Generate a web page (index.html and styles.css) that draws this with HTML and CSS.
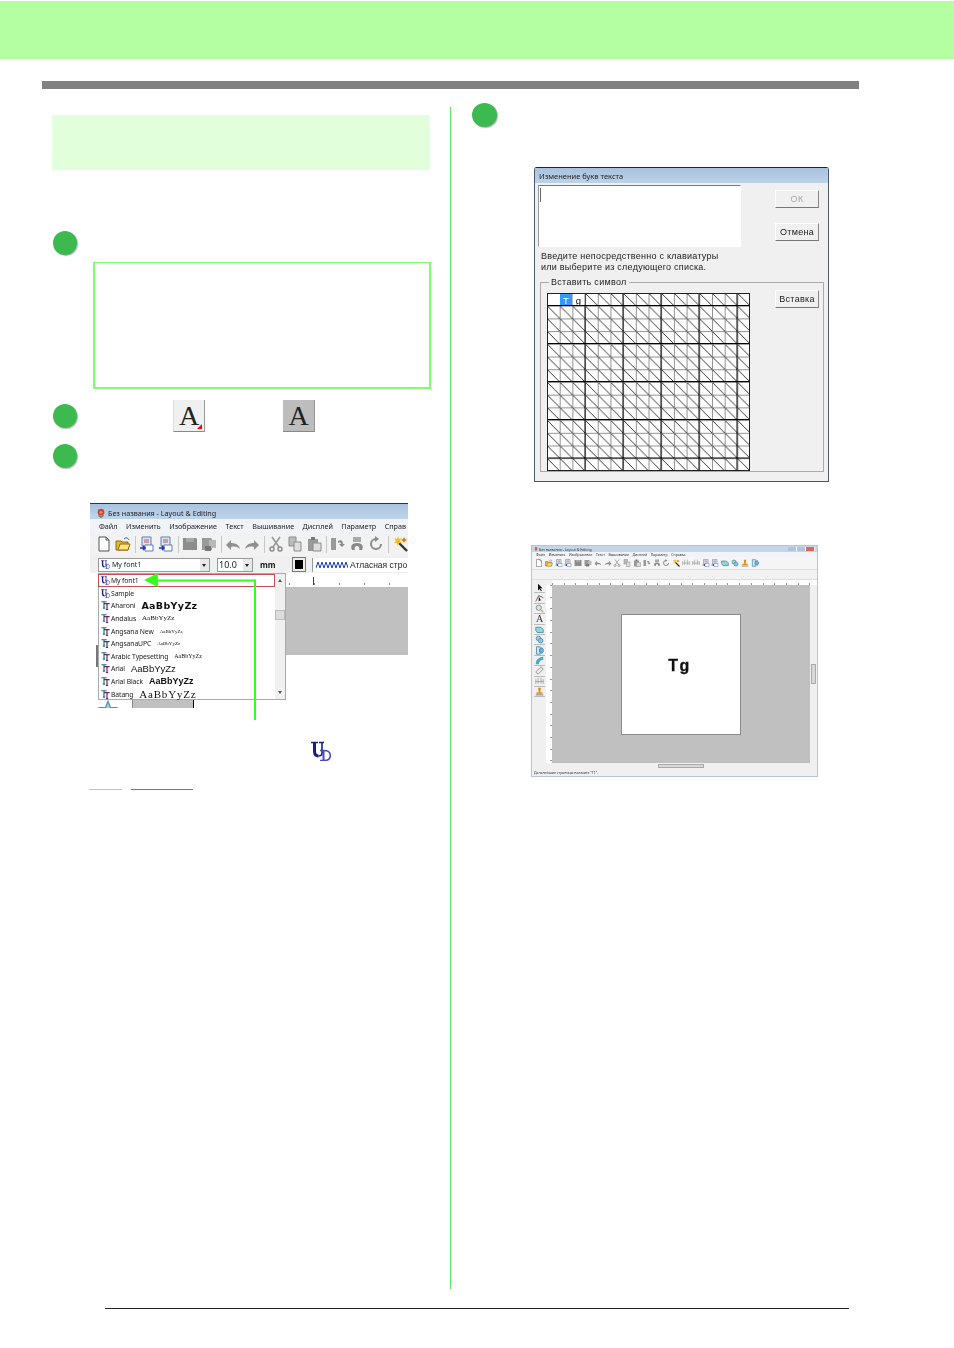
FILE: index.html
```html
<!DOCTYPE html>
<html lang="ru">
<head>
    <meta charset="UTF-8">
    <meta name="viewport" content="width=device-width, initial-scale=1.0">
    <title>Layout &amp; Editing</title>
    <link rel="stylesheet" href="styles.css">
</head>
<body>
    <svg class="icon-defs" width="0" height="0">
        <symbol id="ic-new" viewBox="0 0 16 16"><path d="M3 1h7l3 3v11H3z" fill="#fff" stroke="#555"/><path d="M10 1v3h3" fill="none" stroke="#555"/></symbol>
        <symbol id="ic-open" viewBox="0 0 16 16"><path d="M1 5h5l1 1h6v8H1z" fill="#e8b92e" stroke="#8a6a10"/><path d="M3 14l2-6h10l-2 6z" fill="#ffe27a" stroke="#8a6a10"/><path d="M9 3c2-2 4-1 5 1" fill="none" stroke="#2a4fb5"/></symbol>
        <symbol id="ic-import" viewBox="0 0 16 16"><path d="M3 1h9v9H3z" fill="#d9e6f5" stroke="#5f7fa8"/><path d="M5 4h5M5 6h5" stroke="#c0506a"/><path d="M6 9h8v6H6z" fill="#fff" stroke="#5f7fa8"/><path d="M1 12h5M4 10l2 2-2 2" fill="none" stroke="#2233bb" stroke-width="1.5"/></symbol>
        <symbol id="ic-save" viewBox="0 0 16 16"><path d="M1 2h13l1 1v11H1z" fill="#8c8c8c"/><path d="M4 2h8v4H4z" fill="#a8a8a8"/></symbol>
        <symbol id="ic-saveas" viewBox="0 0 16 16"><path d="M1 2h9l1 1v11H1z" fill="#9a9a9a"/><path d="M8 4h7v8H8z" fill="#b8b8b8"/><path d="M4 10h6v5H4z" fill="#777"/></symbol>
        <symbol id="ic-undo" viewBox="0 0 16 16"><path d="M1 9l5-5v3c5 0 8 2 9 6-2-2-5-3-9-2v3z" fill="#8f8f8f"/></symbol>
        <symbol id="ic-redo" viewBox="0 0 16 16"><path d="M15 9l-5-5v3C5 7 2 9 1 13c2-2 5-3 9-2v3z" fill="#8f8f8f"/></symbol>
        <symbol id="ic-cut" viewBox="0 0 16 16"><path d="M4 1l7 10M12 1L5 11" stroke="#999" stroke-width="1.6" fill="none"/><circle cx="4" cy="13" r="2" fill="none" stroke="#888" stroke-width="1.4"/><circle cx="12" cy="13" r="2" fill="none" stroke="#888" stroke-width="1.4"/></symbol>
        <symbol id="ic-copy" viewBox="0 0 16 16"><path d="M2 1h7v9H2z" fill="#bbb" stroke="#8b8b8b"/><path d="M7 6h7v9H7z" fill="#ddd" stroke="#8b8b8b"/></symbol>
        <symbol id="ic-paste" viewBox="0 0 16 16"><path d="M2 3h10v12H2z" fill="#999"/><path d="M5 1h4v3H5z" fill="#777"/><path d="M7 7h8v8H7z" fill="#ddd" stroke="#8b8b8b"/></symbol>
        <symbol id="ic-flip" viewBox="0 0 16 16"><path d="M1 2h5v12H1z" fill="#999"/><path d="M8 5c3-2 5 0 5 3h2l-3 3-3-3h2c0-1-1-2-3-1z" fill="#8a8a8a"/></symbol>
        <symbol id="ic-rot" viewBox="0 0 16 16"><path d="M4 1h8v5H4z" fill="#aaa"/><path d="M3 14c-2-4 0-7 5-7s7 3 5 7h-3c1-2 0-4-2-4s-3 2-2 4z" fill="#888"/></symbol>
        <symbol id="ic-turn" viewBox="0 0 16 16"><path d="M13 8a5 5 0 1 1-5-5" fill="none" stroke="#8a8a8a" stroke-width="2"/><path d="M7 0l4 3-4 3z" fill="#8a8a8a"/></symbol>
        <symbol id="ic-wand" viewBox="0 0 16 16"><path d="M6 6l9 9" stroke="#333" stroke-width="2.4"/><path d="M6 0l1 3 3-1-2 3 2 2-3 0-1 3-1-3-3 0 2-2-2-3 3 1z" fill="#f0c020"/><path d="M12 1l1 2 2 1-2 1-1 2-1-2-2-1 2-1z" fill="#e07020"/></symbol>
        <symbol id="ic-ud" viewBox="0 0 20 20"><path d="M0 1.500h7M8 1.500h5" fill="none" stroke="#1c1c85" stroke-width="1.500"/><path d="M3.500 1.500V10c0 3 1.500 5 4 5" fill="none" stroke="#1c1c85" stroke-width="3"/><path d="M11 1.500V12c0 2-1.500 3-3.500 3" fill="none" stroke="#1c1c85" stroke-width="1.600"/><path d="M9 9.500h4c4 0 6.300 2.200 6.300 5s-2.300 5-6.300 5H9" fill="none" stroke="#4a4ab8" stroke-width="1.500"/><path d="M12.500 9.500v10" stroke="#4a4ab8" stroke-width="2"/></symbol>
        <symbol id="ic-tt" viewBox="0 0 12 12"><path d="M0.500 1h7M4 1v8M2.500 9.500h3" fill="none" stroke="#167a6c" stroke-width="1.600"/><path d="M4 3.500h7.500M8 3.500v8M6.500 11.500h3" fill="none" stroke="#7a1a6a" stroke-width="1.600"/></symbol>
        <symbol id="ic-star" viewBox="0 0 16 16"><path d="M8 1l2 5 5 0-4 3 2 6-5-4-5 4 2-6-4-3 5 0z" fill="#9fd0e8" stroke="#5b8fb0"/></symbol>
        <symbol id="ic-rose" viewBox="0 0 12 12"><circle cx="6" cy="5" r="4" fill="#d8402c"/><circle cx="6" cy="5" r="1.800" fill="#f08a70"/><path d="M3 9l3 2 3-2" fill="none" stroke="#4a8a3a" stroke-width="1.500"/></symbol>
        <symbol id="ic-arrow" viewBox="0 0 12 12"><path d="M4 1v9l2-2 2 3 1-1-2-3h3z" fill="#111"/></symbol>
        <symbol id="ic-node" viewBox="0 0 12 12"><path d="M1 10L5 2l6 3" fill="none" stroke="#444"/><path d="M5 3v7l2-2 2 3z" fill="#111"/></symbol>
        <symbol id="ic-zoom" viewBox="0 0 12 12"><circle cx="5" cy="5" r="3.500" fill="#cfe6f5" stroke="#777"/><path d="M8 8l3 3" stroke="#c9a050" stroke-width="1.500"/></symbol>
        <symbol id="ic-shape" viewBox="0 0 12 12"><path d="M1 3h7l3 3v4H3L1 7z" fill="#8fd8d8" stroke="#3a7fa8"/></symbol>
        <symbol id="ic-blob" viewBox="0 0 12 12"><circle cx="4.500" cy="4.500" r="3" fill="#a8d8c8" stroke="#3a7fa8"/><circle cx="7.500" cy="7.500" r="3" fill="#8fc8e8" stroke="#3a7fa8"/></symbol>
        <symbol id="ic-page" viewBox="0 0 12 12"><path d="M2 1h5v10H2z" fill="#cfe8f5" stroke="#3a7fa8"/><path d="M6 4h3v-2l3 4-3 4V8H6z" fill="#78b8e8" stroke="#3a7fa8"/></symbol>
        <symbol id="ic-curve" viewBox="0 0 12 12"><path d="M1 11C1 5 5 2 11 1v4C8 5 5 7 5 11z" fill="#48a8c8"/></symbol>
        <symbol id="ic-ruler" viewBox="0 0 12 12"><path d="M1 8l7-7 3 3-7 7z" fill="#eee" stroke="#777"/></symbol>
        <symbol id="ic-hoop" viewBox="0 0 12 12"><path d="M1 3v6M4 1v8M8 1v8M11 3v6M1 6h10" stroke="#999" fill="none"/></symbol>
        <symbol id="ic-stamp" viewBox="0 0 12 12"><path d="M4 1h4l-1 6h3v2H2V7h3z" fill="#d89020"/><path d="M1 10h10v1H1z" fill="#555"/></symbol>
    </svg>

    <div class="band"></div>
    <div class="rule"></div>

    <div class="columns">
        <div class="col-left">
            <div class="banner"></div>

            <div class="step step-first"></div>
            <div class="note"></div>

            <div class="step-row">
                <div class="step"></div>
                <div class="tool-btn tool-btn-off">A<span class="corner"></span></div>
                <div class="tool-btn tool-btn-on">A</div>
            </div>

            <div class="step step-third"></div>

            <div class="shot-wrap">
                <div class="shot">
                    <div class="shot-title">
                        <svg class="rose"><use href="#ic-rose"/></svg>
                        <span>Без названия - Layout &amp; Editing</span>
                    </div>
                    <div class="shot-menu">
                        <span>Файл</span><span>Изменить</span><span>Изображение</span><span>Текст</span><span>Вышивание</span><span>Дисплей</span><span>Параметр</span><span>Справ</span>
                    </div>
                    <div class="shot-toolbar">
                        <svg class="tb"><use href="#ic-new"/></svg>
                        <svg class="tb"><use href="#ic-open"/></svg>
                        <i class="sep"></i>
                        <svg class="tb"><use href="#ic-import"/></svg>
                        <svg class="tb"><use href="#ic-import"/></svg>
                        <i class="sep"></i>
                        <svg class="tb"><use href="#ic-save"/></svg>
                        <svg class="tb"><use href="#ic-saveas"/></svg>
                        <i class="sep"></i>
                        <svg class="tb"><use href="#ic-undo"/></svg>
                        <svg class="tb"><use href="#ic-redo"/></svg>
                        <i class="sep"></i>
                        <svg class="tb"><use href="#ic-cut"/></svg>
                        <svg class="tb"><use href="#ic-copy"/></svg>
                        <svg class="tb"><use href="#ic-paste"/></svg>
                        <i class="sep"></i>
                        <svg class="tb"><use href="#ic-flip"/></svg>
                        <svg class="tb"><use href="#ic-rot"/></svg>
                        <svg class="tb"><use href="#ic-turn"/></svg>
                        <i class="sep"></i>
                        <svg class="tb"><use href="#ic-wand"/></svg>
                    </div>
                    <div class="shot-options">
                        <div class="combo combo-font">
                            <svg class="ud"><use href="#ic-ud"/></svg>
                            <span class="combo-text">My font1</span>
                            <span class="combo-btn"></span>
                        </div>
                        <div class="combo combo-size">
                            <span class="combo-text">10.0</span>
                            <span class="combo-btn"></span>
                        </div>
                        <span class="unit">mm</span>
                        <span class="thread"></span>
                        <div class="stitch">
                            <svg class="zigzag" viewBox="0 0 32 8"><path d="M0 7L2 1l2 6 2-6 2 6 2-6 2 6 2-6 2 6 2-6 2 6 2-6 2 6 2-6 2 6 2-6 2 6" fill="none" stroke="#1d3fc4"/></svg>
                            <span>Атласная стро</span>
                        </div>
                    </div>
                    <div class="shot-ws">
                        <div class="ruler"><span class="ruler-mark"></span></div>
                        <div class="ws-gray"></div>
                    </div>
                    <div class="shot-under">
                        <svg class="star"><use href="#ic-star"/></svg>
                        <span class="under-btn"></span>
                        <span class="under-box"></span>
                    </div>
                    <div class="sash"></div>
                    <div class="dropdown">
                        <div class="dd-list">
                            <div class="dd-item dd-selected"><svg class="ud"><use href="#ic-ud"/></svg><span>My font1</span></div>
                            <div class="dd-item"><svg class="ud"><use href="#ic-ud"/></svg><span>Sample</span></div>
                            <div class="dd-item"><svg class="tt"><use href="#ic-tt"/></svg><span>Aharoni</span><b class="pv pv-aharoni">AaBbYyZz</b></div>
                            <div class="dd-item"><svg class="tt"><use href="#ic-tt"/></svg><span>Andalus</span><b class="pv pv-andalus">AaBbYyZz</b></div>
                            <div class="dd-item"><svg class="tt"><use href="#ic-tt"/></svg><span>Angsana New</span><b class="pv pv-angsana">AaBbYyZz</b></div>
                            <div class="dd-item"><svg class="tt"><use href="#ic-tt"/></svg><span>AngsanaUPC</span><b class="pv pv-angsana">AaBbYyZz</b></div>
                            <div class="dd-item"><svg class="tt"><use href="#ic-tt"/></svg><span>Arabic Typesetting</span><b class="pv pv-arabic">AaBbYyZz</b></div>
                            <div class="dd-item"><svg class="tt"><use href="#ic-tt"/></svg><span>Arial</span><b class="pv pv-arial">AaBbYyZz</b></div>
                            <div class="dd-item"><svg class="tt"><use href="#ic-tt"/></svg><span>Arial Black</span><b class="pv pv-black">AaBbYyZz</b></div>
                            <div class="dd-item"><svg class="tt"><use href="#ic-tt"/></svg><span>Batang</span><b class="pv pv-batang">AaBbYyZz</b></div>
                        </div>
                        <div class="dd-scroll">
                            <span class="dd-up"></span>
                            <span class="dd-thumb"></span>
                            <span class="dd-down"></span>
                        </div>
                    </div>
                </div>
                <svg class="pointer" viewBox="0 0 120 150">
                    <path d="M112 8.500H14" fill="none" stroke="#33ff1a" stroke-width="2"/>
                    <path d="M112 7.500V148" fill="none" stroke="#33ff1a" stroke-width="2"/>
                    <path d="M1 8l14-7v14z" fill="#33ff1a"/>
                </svg>
            </div>

            <svg class="ud-large"><use href="#ic-ud"/></svg>

            <div class="cutoff">
                <span class="cutoff-a"></span>
                <span class="cutoff-b"></span>
            </div>
        </div>

        <div class="col-right">
            <div class="step step-right"></div>

            <div class="dialog">
                <div class="dialog-title">Изменение букв текста</div>
                <div class="dialog-body">
                    <div class="dialog-main">
                        <div class="dialog-input"><span class="caret"></span></div>
                        <p class="dialog-hint">Введите непосредственно с клавиатуры<br>или выберите из следующего списка.</p>
                    </div>
                    <div class="dialog-buttons">
                        <button class="btn btn-off">ОК</button>
                        <button class="btn">Отмена</button>
                    </div>
                    <fieldset class="group">
                        <legend>Вставить символ</legend>
                        <div class="char-grid">
                            <svg class="grid-lines" viewBox="0 0 203 178" width="203" height="178">
                                <defs>
                                    <pattern id="cell" width="12.69" height="12.71" patternUnits="userSpaceOnUse">
                                        <path d="M0 0L12.690 12.710" stroke="#222" stroke-width=".9"/>
                                        <path d="M0 .4H12.690M.4 0V12.710" stroke="#7a7a7a" stroke-width=".9"/>
                                    </pattern>
                                </defs>
                                <rect width="203" height="178" fill="url(#cell)"/>
                                <path d="M38 0V178M76 0V178M114 0V178M152 0V178M190 0V178M0 12.500H203M0 50.500H203M0 88.500H203M0 126.500H203M0 165H203" stroke="#000" fill="none"/>
                                <rect x=".5" y=".5" width="202" height="177" fill="none" stroke="#222"/>
                                <rect x="1" y="1" width="12" height="11" fill="#fff"/>
                                <rect x="13" y="1" width="12" height="11" fill="#3399ff"/>
                                <rect x="26" y="1" width="11.500" height="11" fill="#fff"/>
                                <text x="19" y="10.500" class="cell-t">T</text>
                                <text x="31.500" y="10.500" class="cell-g">g</text>
                            </svg>
                        </div>
                        <button class="btn btn-insert">Вставка</button>
                    </fieldset>
                </div>
            </div>

            <div class="window">
                <div class="win-title">
                    <svg class="win-rose"><use href="#ic-rose"/></svg>
                    <span>Без названия - Layout &amp; Editing</span>
                    <span class="win-ctl"><i></i><i></i><i class="win-close"></i></span>
                </div>
                <div class="win-menu">
                    <span>Файл</span><span>Изменить</span><span>Изображение</span><span>Текст</span><span>Вышивание</span><span>Дисплей</span><span>Параметр</span><span>Справка</span>
                </div>
                <div class="win-toolbar">
                    <svg><use href="#ic-new"/></svg><svg><use href="#ic-open"/></svg>
                    <svg><use href="#ic-import"/></svg><svg><use href="#ic-import"/></svg>
                    <svg><use href="#ic-save"/></svg><svg><use href="#ic-saveas"/></svg>
                    <svg><use href="#ic-undo"/></svg><svg><use href="#ic-redo"/></svg>
                    <svg><use href="#ic-cut"/></svg><svg><use href="#ic-copy"/></svg><svg><use href="#ic-paste"/></svg>
                    <svg><use href="#ic-flip"/></svg><svg><use href="#ic-rot"/></svg><svg><use href="#ic-turn"/></svg>
                    <svg><use href="#ic-wand"/></svg>
                    <svg><use href="#ic-hoop"/></svg><svg><use href="#ic-hoop"/></svg>
                    <svg><use href="#ic-import"/></svg><svg><use href="#ic-import"/></svg>
                    <svg><use href="#ic-shape"/></svg><svg><use href="#ic-blob"/></svg>
                    <svg><use href="#ic-stamp"/></svg><svg><use href="#ic-page"/></svg>
                </div>
                <div class="win-blank"></div>
                <div class="win-main">
                    <div class="win-tools">
                        <span class="win-tool"><svg><use href="#ic-arrow"/></svg></span>
                        <span class="win-tool"><svg><use href="#ic-node"/></svg></span>
                        <span class="win-tool"><svg><use href="#ic-zoom"/></svg></span>
                        <span class="win-tool win-tool-a">A</span>
                        <span class="win-tool"><svg><use href="#ic-shape"/></svg></span>
                        <span class="win-tool"><svg><use href="#ic-blob"/></svg></span>
                        <span class="win-tool"><svg><use href="#ic-page"/></svg></span>
                        <span class="win-tool"><svg><use href="#ic-curve"/></svg></span>
                        <span class="win-tool"><svg><use href="#ic-ruler"/></svg></span>
                        <span class="win-tool"><svg><use href="#ic-hoop"/></svg></span>
                        <span class="win-tool"><svg><use href="#ic-stamp"/></svg></span>
                    </div>
                    <div class="win-work">
                        <div class="win-hruler"></div>
                        <div class="win-center">
                            <div class="win-vruler"></div>
                            <div class="win-canvas">
                                <div class="win-page">Tg</div>
                            </div>
                            <div class="win-vscroll"><span></span></div>
                        </div>
                        <div class="win-hscroll"><span></span></div>
                    </div>
                </div>
                <div class="win-status">Дальнейшие страницы нажмите "T1".</div>
            </div>
        </div>
    </div>

    <div class="bottom-rule"></div>
</body>
</html>
```

FILE: styles.css
```css
body {
    margin: 0;
    background-color: #fff;
    font-family: "Noto Sans", "Liberation Sans", sans-serif;
}
.icon-defs {
    position: absolute;
}
.band {
    height: 58px;
    margin-top: 1px;
    background-color: #b3ffa1;
}
.rule {
    height: 8px;
    width: 817px;
    margin: 22px 0 0 42px;
    background-color: #808080;
}
.columns {
    display: grid;
    grid-template-columns: 409px 1fr;
    height: 1182px;
    margin: 18px 0 0 42px;
}
.col-left {
    padding: 8px 0 0 10px;
    border-right: 1px solid #5ee85e;
}
.banner {
    width: 378px;
    height: 55px;
    background-color: #e1ffdb;
}
.step {
    width: 24px;
    height: 24px;
    border-radius: 50%;
    background-color: #3cba50;
    box-shadow: 1px 1px 1px #b5b5b5;
    flex-shrink: 0;
}
.step-first {
    margin: 61px 0 0 1px;
}
.note {
    width: 334px;
    height: 123px;
    margin: 7px 0 0 41px;
    border: 2px solid #7dff6f;
    border-top-width: 1px;
    padding-bottom: 1px;
}
.step-row {
    display: flex;
    align-items: center;
    height: 32px;
    margin: 11px 0 0 1px;
}
.tool-btn {
    width: 32px;
    height: 32px;
    box-sizing: border-box;
    position: relative;
    text-align: center;
    font-family: "Liberation Serif", serif;
    font-size: 28px;
    line-height: 31px;
    color: #222;
}
.tool-btn-off {
    margin-left: 96px;
    background-color: #f0f0f0;
    border-right: 1px solid #999;
    border-bottom: 1px solid #888;
    border-left: 1px solid #ddd;
}
.tool-btn-on {
    margin-left: 78px;
    background-color: #bdbdbd;
    border-right: 1px solid #999;
    border-bottom: 1px solid #888;
}
.corner {
    position: absolute;
    right: 2px;
    bottom: 2px;
    border-style: solid;
    border-width: 0 0 5px 5px;
    border-color: transparent transparent #f00 transparent;
}
.step-third {
    margin: 12px 0 0 1px;
}

/* font list screenshot */
.shot-wrap {
    position: relative;
    width: 318px;
    margin: 35px 0 0 38px;
}
.shot {
    position: relative;
    height: 205px;
    overflow: hidden;
    filter: blur(.35px);
    font-size: 8px;
    color: #222;
}
.shot-title {
    display: flex;
    align-items: center;
    gap: 2px;
    height: 16px;
    box-sizing: border-box;
    padding: 3px 0 0 6px;
    border-top: 1px solid #333;
    background: linear-gradient(#a8c3e0, #c0d5ea);
    font-size: 7.200px;
}
.rose {
    width: 10px;
    height: 10px;
}
.shot-menu {
    display: flex;
    gap: 8.500px;
    align-items: center;
    height: 14px;
    padding-left: 9px;
    white-space: nowrap;
    background-color: #f0f3f8;
    font-size: 7.200px;
}
.shot-toolbar {
    display: flex;
    align-items: center;
    height: 23px;
    padding: 0 0 1px 6px;
    box-sizing: border-box;
    gap: 3px;
    background-color: #f2f2f2;
}
.tb {
    width: 16px;
    height: 16px;
    flex-shrink: 0;
}
.sep {
    width: 1px;
    height: 17px;
    margin: 0 .5px;
    background-color: #c8c8c8;
}
.shot-options {
    display: flex;
    align-items: center;
    height: 17px;
    background-color: #f0f0f0;
    padding-left: 8px;
    white-space: nowrap;
}
.combo {
    display: flex;
    align-items: center;
    height: 14px;
    box-sizing: border-box;
    border: 1px solid #999;
    background-color: #fff;
    font-size: 7px;
}
.combo-font {
    width: 112px;
}
.combo-size {
    width: 36px;
    margin-left: 7px;
    font-size: 9px;
    padding-left: 1px;
}
.combo-text {
    flex: 1;
}
.combo-btn {
    width: 9px;
    height: 12px;
    margin-right: 0;
    background-color: #e8e8e8;
    position: relative;
}
.combo-btn::after {
    content: "";
    position: absolute;
    left: 2px;
    top: 5px;
    border-style: solid;
    border-width: 3px 2.5px 0;
    border-color: #222 transparent transparent;
}
.ud {
    width: 9px;
    height: 9px;
    margin: 0 2px;
    flex-shrink: 0;
}
.unit {
    width: 14px;
    margin-left: 7px;
    font-weight: bold;
    font-size: 8px;
}
.thread {
    width: 8px;
    height: 9px;
    margin-left: 18px;
    border: 3px solid #eee;
    outline: 1px solid #777;
    outline-offset: -1px;
    background-color: #000;
}
.stitch {
    display: flex;
    align-items: center;
    gap: 2px;
    flex: 1;
    height: 14px;
    margin-left: 6px;
    padding-left: 3px;
    background-color: #fff;
    border-left: 1px solid #999;
    font-family: "Liberation Sans", sans-serif;
    font-size: 8.500px;
    overflow: hidden;
}
.zigzag {
    width: 32px;
    height: 8px;
    flex-shrink: 0;
}
.shot-ws {
    padding-left: 196px;
}
.ruler {
    position: relative;
    height: 14px;
    box-sizing: border-box;
    background-color: #fff;
    background-image: repeating-linear-gradient(90deg, #888 0 1px, transparent 1px 25px);
    background-size: 100% 2px;
    background-position: 3px 10px;
    background-repeat: no-repeat;
}
.ruler-mark {
    position: absolute;
    left: 27px;
    top: 4px;
    width: 1px;
    height: 8px;
    background-color: #444;
}
.ws-gray {
    height: 68px;
    background-color: #c0c0c0;
}
.shot-under {
    display: flex;
    margin-top: 45px;
    height: 8px;
    padding-left: 8px;
}
.star {
    width: 20px;
    height: 20px;
    flex-shrink: 0;
}
.under-btn {
    width: 14px;
}
.under-box {
    width: 60px;
    height: 8px;
    background-color: #c0c0c0;
    border-right: 1px solid #000;
    border-left: 1px solid #888;
}
.sash {
    position: absolute;
    left: 6px;
    top: 142px;
    width: 2px;
    height: 22px;
    background-color: #777;
}
.dropdown {
    position: absolute;
    left: 8px;
    top: 70px;
    width: 188px;
    height: 127px;
    box-sizing: border-box;
    display: flex;
    background-color: #fff;
    border: 1px solid #aaa;
}
.dd-list {
    flex: 1;
    font-size: 6.800px;
}
.dd-item {
    display: flex;
    align-items: center;
    height: 12.600px;
    white-space: nowrap;
}
.dd-selected {
    height: 13px;
    box-sizing: border-box;
    border: 1px solid #c0504d;
    margin-left: -1px;
}
.dd-item .ud, .tt {
    margin: 0 1px 0 2px;
}
.dd-item span {
    margin-right: 6px;
    letter-spacing: -.1px;
}
.tt {
    width: 9px;
    height: 9px;
    flex-shrink: 0;
}
.pv {
    color: #111;
    font-weight: normal;
}
.pv-aharoni {
    font-family: "DejaVu Sans", sans-serif;
    font-weight: bold;
    font-size: 9.500px;
    letter-spacing: .35px;
}
.pv-andalus {
    font-family: "Liberation Serif", serif;
    font-size: 7px;
}
.pv-angsana {
    font-family: "Liberation Serif", serif;
    font-size: 5px;
}
.pv-arabic {
    font-family: "Liberation Serif", serif;
    font-size: 6px;
}
.pv-arial {
    font-family: "Liberation Sans", sans-serif;
    font-size: 9.500px;
}
.pv-black {
    font-family: "Liberation Sans", sans-serif;
    font-weight: bold;
    font-size: 9px;
}
.pv-batang {
    font-family: "Liberation Serif", serif;
    font-size: 11px;
    letter-spacing: .8px;
}
.dd-scroll {
    position: relative;
    width: 10px;
    background-color: #f0f0f0;
}
.dd-up, .dd-down {
    position: absolute;
    left: 2.500px;
    border-style: solid;
    border-color: transparent;
}
.dd-up {
    top: 5px;
    border-width: 0 2.500px 3px;
    border-bottom-color: #555;
}
.dd-down {
    bottom: 5px;
    border-width: 3px 2.500px 0;
    border-top-color: #555;
}
.dd-thumb {
    position: absolute;
    left: 0;
    top: 36px;
    width: 10px;
    height: 10px;
    background-color: #ddd;
    outline: 1px solid #bbb;
    outline-offset: -1px;
}
.pointer {
    position: absolute;
    left: 53px;
    top: 69px;
    width: 120px;
    height: 150px;
}
.ud-large {
    display: block;
    width: 20px;
    height: 20px;
    margin: 33px 0 0 259px;
}
.cutoff {
    display: flex;
    height: 1px;
    margin: 28px 0 0 37px;
}
.cutoff-a {
    width: 33px;
    background-color: #b8c4d8;
}
.cutoff-b {
    width: 62px;
    margin-left: 9px;
    background-color: #777;
}

/* right column */
.col-right {
    padding-left: 21px;
}
.step-right {
    width: 25px;
    margin-top: -4px;
}

/* dialog */
.dialog {
    width: 295px;
    height: 315px;
    box-sizing: border-box;
    margin: 40px 0 0 62px;
    border: 1px solid #4a5a70;
    border-top-color: #222;
    border-bottom-color: #2a5f9a;
    border-radius: 3px 3px 0 0;
    background-color: #f0f0f0;
    filter: blur(.3px);
}
.dialog-title {
    height: 15px;
    padding-left: 4px;
    background: linear-gradient(#a8c3e0, #bcd2e8);
    font-size: 7.500px;
    line-height: 16px;
    color: #222;
}
.dialog-body {
    display: grid;
    grid-template-columns: 237px 1fr;
    padding: 2px 0 0 3px;
}
.dialog-input {
    width: 203px;
    height: 62px;
    box-sizing: border-box;
    border: 1px solid #fff;
    border-top-color: #777;
    border-left-color: #999;
    background-color: #fff;
    padding: 2px 1px;
}
.caret {
    display: block;
    width: 1px;
    height: 14px;
    background-color: #666;
}
.dialog-hint {
    margin: 4px 0 0 3px;
    font-family: "Liberation Sans", sans-serif;
    font-size: 9px;
    line-height: 11px;
    letter-spacing: .25px;
    white-space: nowrap;
    color: #222;
}
.dialog-buttons {
    display: flex;
    flex-direction: column;
    gap: 15px;
    padding-top: 5px;
}
.btn {
    display: block;
    width: 44px;
    height: 18px;
    box-sizing: border-box;
    padding: 0;
    border: 1px solid #fff;
    border-right-color: #888;
    border-bottom-color: #777;
    background-color: #f0f0f0;
    font-family: "Liberation Sans", sans-serif;
    font-size: 9px;
    letter-spacing: .3px;
    color: #222;
}
.btn-off {
    color: #aaa;
}
.group {
    grid-column: 1 / 3;
    display: flex;
    align-items: flex-start;
    width: 284px;
    height: 195px;
    box-sizing: border-box;
    margin: 4px 0 0 2px;
    padding: 6px 0 0 6px;
    border: 1px solid #aaa;
}
.group legend {
    margin-left: 2px;
    padding: 0 2px;
    font-family: "Liberation Sans", sans-serif;
    font-size: 9px;
    line-height: 10px;
    letter-spacing: .3px;
    color: #222;
}
.char-grid {
    display: flex;
    width: 203px;
    height: 178px;
    background-color: #fff;
}
.cell-t, .cell-g {
    font-family: "Liberation Sans", sans-serif;
    font-size: 9.500px;
    text-anchor: middle;
}
.cell-t {
    fill: #fff;
}
.btn-insert {
    margin: -3px 0 0 25px;
}

/* finished design window */
.window {
    display: flex;
    flex-direction: column;
    width: 287px;
    height: 232px;
    box-sizing: border-box;
    margin: 63px 0 0 59px;
    border: 1px solid #b5c5d8;
    background-color: #f0f0f0;
    filter: blur(.45px);
    color: #333;
}
.win-title {
    display: flex;
    align-items: center;
    gap: 1px;
    height: 6px;
    padding-left: 2px;
    background-color: #c5d6e8;
    font-size: 3.500px;
}
.win-rose {
    width: 4px;
    height: 4px;
}
.win-ctl {
    display: flex;
    margin-left: auto;
    margin-right: 2px;
}
.win-ctl i {
    width: 8px;
    height: 4px;
    background-color: #b0c4dc;
    border: 0 solid #fff;
    border-right-width: 1px;
}
.win-ctl .win-close {
    background-color: #d8685a;
}
.win-menu {
    display: flex;
    gap: 3.600px;
    height: 5px;
    padding-left: 4px;
    align-items: center;
    font-size: 3.500px;
    white-space: nowrap;
    background-color: #f0f3f8;
}
.win-toolbar {
    display: flex;
    align-items: center;
    gap: 1.800px;
    height: 12px;
    padding-left: 3px;
    background-color: #f5f5f5;
}
.win-toolbar svg {
    width: 8px;
    height: 8px;
    flex-shrink: 0;
}
.win-blank {
    height: 11px;
    box-sizing: border-box;
    background-color: #f2f2f2;
    border-top: 1px solid #ddd;
    border-bottom: 1px solid #ddd;
}
.win-main {
    display: flex;
    flex: 1;
}
.win-tools {
    display: flex;
    flex-direction: column;
    width: 14px;
    padding: 3px 0 0 2px;
    box-sizing: border-box;
    gap: 0;
    flex-shrink: 0;
}
.win-tool {
    display: flex;
    align-items: center;
    justify-content: center;
    width: 11px;
    height: 10.400px;
    box-sizing: border-box;
    border-bottom: .5px solid #bbb;
    font-family: "Liberation Serif", serif;
    font-size: 10px;
    line-height: 9px;
}
.win-tool svg {
    width: 9px;
    height: 9px;
}
.win-work {
    display: flex;
    flex-direction: column;
    flex: 1;
}
.win-hruler {
    height: 5px;
    margin-left: 6px;
    background-color: #fff;
    background-image: repeating-linear-gradient(90deg, #999 0 1px, transparent 1px 11.700px);
    background-size: 100% 2px;
    background-position: bottom;
    background-repeat: no-repeat;
}
.win-center {
    display: flex;
    flex: 1;
}
.win-vruler {
    width: 6px;
    background-color: #fff;
    background-image: repeating-linear-gradient(#999 0 1px, transparent 1px 11.700px);
    background-size: 2px 100%;
    background-repeat: no-repeat;
    background-position: right;
}
.win-canvas {
    flex: 1;
    padding: 29px 0 0 69px;
    background-color: #c0c0c0;
}
.win-page {
    width: 120px;
    height: 121px;
    box-sizing: border-box;
    border: 1px solid #8a8a8a;
    padding-right: 3px;
    background-color: #fff;
    text-align: center;
    font-family: "Liberation Sans", sans-serif;
    font-weight: bold;
    font-size: 16px;
    line-height: 102px;
    letter-spacing: 1.500px;
    color: #111;
    -webkit-text-stroke: .3px #111;
}
.win-vscroll {
    position: relative;
    width: 7px;
    background-color: #f0f0f0;
}
.win-vscroll span {
    position: absolute;
    left: 1px;
    top: 79px;
    width: 5px;
    height: 20px;
    background-color: #d8d8d8;
    border: 1px solid #aaa;
    box-sizing: border-box;
}
.win-hscroll {
    position: relative;
    height: 7px;
    background-color: #f0f0f0;
}
.win-hscroll span {
    position: absolute;
    left: 112px;
    top: 1px;
    width: 46px;
    height: 4px;
    background-color: #d8d8d8;
    border: 1px solid #aaa;
    box-sizing: border-box;
}
.win-status {
    height: 6px;
    padding-left: 2px;
    font-size: 3.500px;
    line-height: 6px;
    white-space: nowrap;
}

.bottom-rule {
    width: 744px;
    height: 1px;
    margin: 19px 0 0 105px;
    background-color: #222;
}
```
